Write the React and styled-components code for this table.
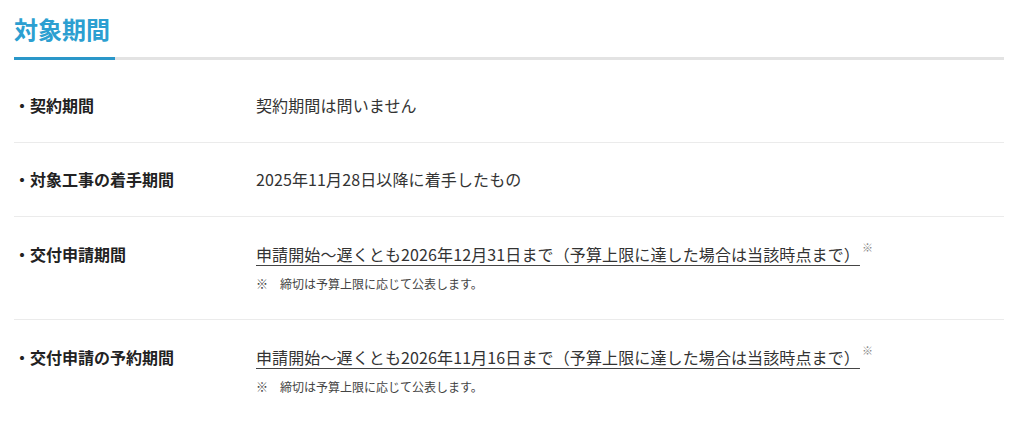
import React from "react";
import styled, { createGlobalStyle } from "styled-components";

const Global = createGlobalStyle`
  html, body { margin: 0; padding: 0; background: #fff; }
  body { font-family: "Noto Sans CJK JP", "Noto Sans", sans-serif; color: #333; }
`;

const Section = styled.section`
  width: 990px;
  margin-left: 14px;
  padding-top: 11px;
`;

const Heading = styled.h2`
  margin: 0;
  font-size: 24px;
  line-height: 36px;
  font-weight: 700;
  color: #2c9fd1;
  padding-bottom: 10px;
  position: relative;
  border-bottom: 3px solid #e3e3e3;
  &::after {
    content: "";
    position: absolute;
    left: 0;
    bottom: -3px;
    width: 101px;
    height: 3px;
    background: #2a97c9;
  }
`;

const List = styled.dl`
  margin: 9px 0 0;
`;

const Row = styled.div`
  display: grid;
  grid-template-columns: 242px 1fr;
  padding: ${(p) => (p.$note ? "25px 0 26px" : "24px 0 25px")};
  border-bottom: ${(p) => (p.$last ? "none" : "1px solid #ebebeb")};
`;

const Label = styled.dt`
  margin: 0;
  font-size: 16px;
  line-height: 24px;
  font-weight: 700;
  color: #222;
`;

const Value = styled.dd`
  margin: 0;
  font-size: 16px;
  line-height: 24px;
  letter-spacing: 0.12px;
  color: #333;
`;

const Linked = styled.span`
  text-decoration: underline;
  text-decoration-color: #444;
  text-underline-offset: 4px;
  text-decoration-thickness: 1px;
`;

const Sup = styled.sup`
  font-size: 11px;
  color: #888;
  vertical-align: 9px;
  line-height: 0;
  margin-left: 2px;
`;

const Note = styled.p`
  margin: 9px 0 0;
  font-size: 12px;
  line-height: 18px;
  letter-spacing: 0;
  color: #444;
  display: flex;
  gap: 12px;
`;

const rows = [
  { label: "・契約期間", value: "契約期間は問いません" },
  { label: "・対象工事の着手期間", value: "2025年11月28日以降に着手したもの" },
  {
    label: "・交付申請期間",
    value: "申請開始〜遅くとも2026年12月31日まで（予算上限に達した場合は当該時点まで）",
    link: true,
  },
  {
    label: "・交付申請の予約期間",
    value: "申請開始〜遅くとも2026年11月16日まで（予算上限に達した場合は当該時点まで）",
    link: true,
  },
];

export default function App() {
  return (
    <>
      <Global />
      <Section>
        <Heading>対象期間</Heading>
        <List>
          {rows.map((r, i) => (
            <Row key={r.label} $note={r.link} $last={i === rows.length - 1}>
              <Label>{r.label}</Label>
              <Value>
                {r.link ? (
                  <>
                    <Linked>{r.value}</Linked>
                    <Sup>※</Sup>
                    <Note>
                      <span>※</span>
                      <span>締切は予算上限に応じて公表します。</span>
                    </Note>
                  </>
                ) : (
                  r.value
                )}
              </Value>
            </Row>
          ))}
        </List>
      </Section>
    </>
  );
}
